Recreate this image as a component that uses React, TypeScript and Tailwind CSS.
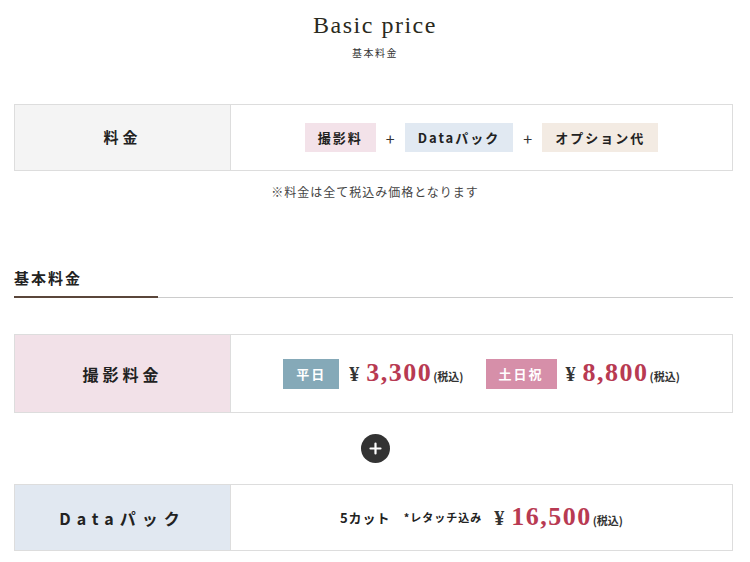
import React from "react";

const jp = { fontFamily: '"Noto Sans CJK JP", "Noto Sans", sans-serif' };
const serif = { fontFamily: '"Liberation Serif", "Noto Sans CJK JP", serif' };

function Price({ value }: { value: string }) {
  return (
    <span className="flex items-baseline">
      <span style={serif} className="text-[20px] font-bold text-[#333] mr-[7px]">¥</span>
      <span style={serif} className="text-[26px] font-bold text-[#b83a52] tracking-[1.5px] leading-none">{value}</span>
      <span style={jp} className="ml-[1px] text-[11px] font-bold text-[#333]">(税込)</span>
    </span>
  );
}

export default function App() {
  return (
    <div className="w-[750px] min-h-[562px] bg-white text-[#222]" style={jp}>
      <div className="pt-[11px] text-center">
        <h1 style={serif} className="text-[24px] leading-[28px] tracking-[1.5px] text-[#2a2a20]">Basic price</h1>
        <p className="mt-[7px] text-[10px] leading-[14px] tracking-[1.5px] text-[#333]">基本料金</p>
      </div>

      <div className="ml-[14px] mt-[44px] flex h-[67px] w-[719px] border border-[#dddddd]">
        <div className="flex w-[216px] items-center justify-center border-r border-[#dddddd] bg-[#f4f4f4]">
          <span className="text-[15px] font-bold tracking-[4px] text-[#222]">料金</span>
        </div>
        <div className="flex flex-1 items-center justify-center gap-[10px]">
          <span className="flex h-[29px] items-center bg-[#f3e2e9] px-[13px] text-[13px] font-bold tracking-[2px]">撮影料</span>
          <span className="text-[16px] text-[#333]">+</span>
          <span className="flex h-[29px] items-center bg-[#e1e9f2] px-[13px] text-[13px] font-bold tracking-[2px]">Dataパック</span>
          <span className="text-[16px] text-[#333]">+</span>
          <span className="flex h-[29px] items-center bg-[#f3ebe3] px-[13px] text-[13px] font-bold tracking-[2px]">オプション代</span>
        </div>
      </div>

      <p className="mt-[12px] text-center text-[12px] leading-[18px] tracking-[1px] text-[#444]">※料金は全て税込み価格となります</p>

      <div className="ml-[14px] mt-[66px] w-[719px]">
        <h2 className="text-[15px] font-bold leading-[22px] tracking-[2px] text-[#222]">基本料金</h2>
        <div className="mt-[7px] flex items-end">
          <div className="h-[2px] w-[144px] bg-[#5a463a]" />
          <div className="h-[1px] flex-1 bg-[#cccccc]" />
        </div>
      </div>

      <div className="ml-[14px] mt-[36px] flex h-[79px] w-[719px] border border-[#dddddd]">
        <div className="flex w-[216px] items-center justify-center border-r border-[#dddddd] bg-[#f2e1e8]">
          <span className="text-[16px] font-bold tracking-[4px] text-[#222]">撮影料金</span>
        </div>
        <div className="flex flex-1 items-center justify-center">
          <span className="flex h-[30px] w-[56px] items-center justify-center bg-[#85a9b8] text-[13px] font-bold tracking-[2px] text-white">平日</span>
          <span className="ml-[10px]"><Price value="3,300" /></span>
          <span className="ml-[22px] flex h-[30px] w-[71px] items-center justify-center bg-[#d68fa9] text-[13px] font-bold tracking-[2px] text-white">土日祝</span>
          <span className="ml-[9px]"><Price value="8,800" /></span>
        </div>
      </div>

      <div className="mt-[21px] flex justify-center">
        <div className="flex h-[29px] w-[29px] items-center justify-center rounded-full bg-[#333333]">
          <svg width="13" height="13" viewBox="0 0 13 13">
            <path d="M6.5 1.5v10M1.5 6.5h10" stroke="white" strokeWidth="2.2" strokeLinecap="round" />
          </svg>
        </div>
      </div>

      <div className="ml-[14px] mt-[21px] flex h-[67px] w-[719px] border border-[#dddddd]">
        <div className="flex w-[216px] items-center justify-center border-r border-[#dddddd] bg-[#e1e8f1]">
          <span className="text-[16px] font-bold tracking-[6px] text-[#222]">Dataパック</span>
        </div>
        <div className="flex flex-1 items-center justify-center">
          <span className="text-[13px] font-bold tracking-[1px] text-[#222]">5カット</span>
          <span className="ml-[13px] text-[11px] font-bold tracking-[1px] text-[#222]">*レタッチ込み</span>
          <span className="ml-[12px]"><Price value="16,500" /></span>
        </div>
      </div>
    </div>
  );
}
